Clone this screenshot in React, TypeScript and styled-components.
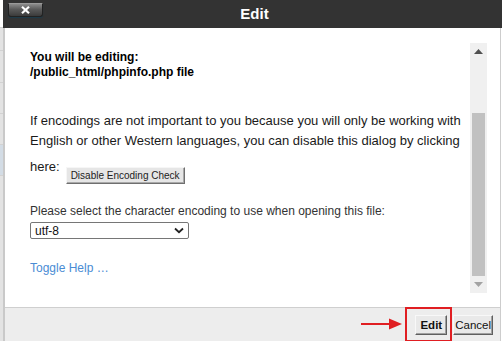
import React from 'react';
import styled, { createGlobalStyle } from 'styled-components';

const GlobalStyle = createGlobalStyle`
  html, body {
    margin: 0;
    padding: 0;
    background: #ffffff;
  }
  body {
    font-family: 'Liberation Sans', Arial, sans-serif;
  }
`;

const Page = styled.div`
  display: flex;
  width: 502px;
  height: 341px;
  overflow: hidden;
`;

// sliver of the page behind the dialog
const BackdropStrip = styled.div`
  width: 3px;
  flex: none;
  display: flex;
  flex-direction: column;
  background: #ffffff;
`;

const BackdropRow = styled.div<{ $h: number; $tint?: string }>`
  height: ${(p) => p.$h}px;
  flex: none;
  background: ${(p) => p.$tint || '#e3e3e3'};
  border-bottom: 1px solid #d2d2d2;
`;

const Dialog = styled.div`
  flex: 1;
  display: flex;
  flex-direction: column;
  min-width: 0;
`;

const TitleBar = styled.div`
  height: 28px;
  flex: none;
  background: #333333;
  display: grid;
  grid-template-columns: 1fr auto 1fr;
  align-items: start;
`;

const CloseButton = styled.button`
  justify-self: start;
  margin: 3px 0 0 5px;
  width: 35px;
  height: 14px;
  padding: 0;
  border: 1px solid #222;
  border-top-color: #9a9a9a;
  border-radius: 1px 1px 3px 3px;
  background: linear-gradient(#8c8c8c, #5a5a5a 45%, #3b3b3b);
  box-shadow: 0 1px 1px #1d3b4a;
  display: flex;
  align-items: center;
  justify-content: center;
  cursor: pointer;
`;

const Title = styled.div`
  color: #ffffff;
  font-weight: bold;
  font-size: 15px;
  line-height: 28px;
  padding-left: 4px;
`;

const Frame = styled.div`
  flex: 1;
  display: flex;
  flex-direction: column;
  border-left: 2px solid #c9c9c9;
  border-right: 1px solid #cdcdcd;
  margin-right: 1px;
  min-height: 0;
`;

const Body = styled.div`
  height: 279px;
  flex: none;
  background: #ffffff;
  padding: 15px 13px 14px 0;
  box-sizing: border-box;
  display: flex;
`;

const ScrollContent = styled.div`
  flex: 1;
  padding: 7px 0 0 25px;
  color: #111111;
`;

const Heading = styled.div`
  font-size: 12px;
  font-weight: bold;
  line-height: 15px;
  color: #000;
`;

const Paragraph = styled.p`
  margin: 31px 0 0;
  font-size: 13px;
  line-height: 20px;
  color: #1a1a1a;
  width: 440px;
`;

const HereRow = styled.div`
  display: flex;
  align-items: flex-start;
  margin-top: 6px;
  font-size: 13px;
  line-height: 20px;
  color: #1a1a1a;
`;

const SmallButton = styled.button`
  margin: 10px 0 0 6px;
  height: 17px;
  padding: 0 4px;
  background: #e6e6e6;
  border: 1px solid;
  border-color: #f6f6f6 #6f6f6f #6f6f6f #f6f6f6;
  box-shadow: inset -1px -1px #a9a9a9;
  font-family: 'Liberation Sans', Arial, sans-serif;
  font-size: 10px;
  color: #222;
  line-height: 14px;
`;

const Label = styled.div`
  margin-top: 20px;
  font-size: 12px;
  line-height: 15px;
  color: #333333;
`;

const SelectBox = styled.div`
  margin-top: 3px;
  width: 159px;
  height: 17px;
  box-sizing: border-box;
  border: 1px solid #767676;
  border-radius: 2px;
  display: flex;
  align-items: center;
  padding: 0 4px 0 4px;
`;

const NativeSelect = styled.select`
  flex: 1;
  appearance: none;
  border: none;
  background: transparent;
  padding: 0;
  font-family: 'Liberation Sans', Arial, sans-serif;
  font-size: 12px;
  color: #111;
  outline: none;
`;

const ToggleLink = styled.a`
  display: inline-block;
  margin-top: 22px;
  font-size: 12px;
  color: #4a8cd4;
  text-decoration: none;
`;

const Scrollbar = styled.div`
  width: 17px;
  flex: none;
  background: #f0f0f0;
  display: flex;
  flex-direction: column;
`;

const ArrowCell = styled.div`
  height: 17px;
  flex: none;
  display: flex;
  align-items: center;
  justify-content: center;
`;

const Track = styled.div`
  flex: 1;
  display: flex;
  flex-direction: column;
  padding: 0 2px;
`;

const Thumb = styled.div`
  margin-top: 53px;
  flex: 1;
  background: #c1c1c1;
`;

const Footer = styled.div`
  flex: 1;
  background: #ededed;
  border-top: 1px solid #cfcfcf;
  display: flex;
  justify-content: flex-end;
  align-items: flex-start;
  gap: 6px;
  padding: 7px 7px 0 0;
`;

const FooterButton = styled.button<{ $primary?: boolean }>`
  position: relative;
  height: 20px;
  padding: ${(p) => (p.$primary ? '0 4px' : '0 1px')};
  background: #e9e9e9;
  border: 1px solid;
  border-color: #f8f8f8 #5f5f5f #5f5f5f #f8f8f8;
  box-shadow: inset -1px -1px #a0a0a0;
  font-family: 'Liberation Sans', Arial, sans-serif;
  font-size: 11.5px;
  font-weight: ${(p) => (p.$primary ? 'bold' : 'normal')};
  color: #111;
`;

// red annotation drawn over the screenshot
const Highlight = styled.span`
  position: absolute;
  left: -11px;
  right: -6px;
  top: -9px;
  bottom: -8px;
  border: 2px solid #e01e22;
  pointer-events: none;
`;

const Pointer = styled.svg`
  position: absolute;
  left: -55px;
  top: 1px;
  pointer-events: none;
`;

export default function App() {
  return (
    <>
      <GlobalStyle />
      <Page>
        <BackdropStrip>
          <BackdropRow $h={27} $tint="#ffffff" />
          <BackdropRow $h={22} />
          <BackdropRow $h={31} />
          <BackdropRow $h={30} />
          <BackdropRow $h={30} />
          <BackdropRow $h={30} $tint="#d3dce5" />
          <BackdropRow $h={180} />
        </BackdropStrip>
        <Dialog>
          <TitleBar>
            <CloseButton aria-label="close">
              <svg width="9" height="8" viewBox="0 0 9 8">
                <path d="M1 0.8 L8 7.2 M8 0.8 L1 7.2" stroke="#ffffff" strokeWidth="2.2" />
              </svg>
            </CloseButton>
            <Title>Edit</Title>
            <span />
          </TitleBar>
          <Frame>
            <Body>
              <ScrollContent>
                <Heading>
                  You will be editing:
                  <br />
                  /public_html/phpinfo.php file
                </Heading>
                <Paragraph>
                  If encodings are not important to you because you will only be working with
                  English or other Western languages, you can disable this dialog by clicking
                </Paragraph>
                <HereRow>
                  here:
                  <SmallButton>Disable Encoding Check</SmallButton>
                </HereRow>
                <Label>Please select the character encoding to use when opening this file:</Label>
                <SelectBox>
                  <NativeSelect defaultValue="utf-8">
                    <option value="utf-8">utf-8</option>
                  </NativeSelect>
                  <svg width="10" height="7" viewBox="0 0 10 7">
                    <path d="M1 1.5 L5 5.2 L9 1.5" fill="none" stroke="#222" strokeWidth="1.8" />
                  </svg>
                </SelectBox>
                <ToggleLink href="#">Toggle Help …</ToggleLink>
              </ScrollContent>
              <Scrollbar>
                <ArrowCell>
                  <svg width="9" height="5" viewBox="0 0 9 5">
                    <path d="M0 5 L4.5 0 L9 5 Z" fill="#505050" />
                  </svg>
                </ArrowCell>
                <Track>
                  <Thumb />
                </Track>
                <ArrowCell>
                  <svg width="9" height="5" viewBox="0 0 9 5">
                    <path d="M0 0 L9 0 L4.5 5 Z" fill="#a3a3a3" />
                  </svg>
                </ArrowCell>
              </Scrollbar>
            </Body>
            <Footer>
              <FooterButton $primary>
                Edit
                <Highlight />
                <Pointer width="42" height="14" viewBox="0 0 42 14">
                  <path d="M0 7 H30" stroke="#e01e22" strokeWidth="2" />
                  <path d="M28 1.5 L41 7 L28 12.5 Z" fill="#e01e22" />
                </Pointer>
              </FooterButton>
              <FooterButton>Cancel</FooterButton>
            </Footer>
          </Frame>
        </Dialog>
      </Page>
    </>
  );
}
